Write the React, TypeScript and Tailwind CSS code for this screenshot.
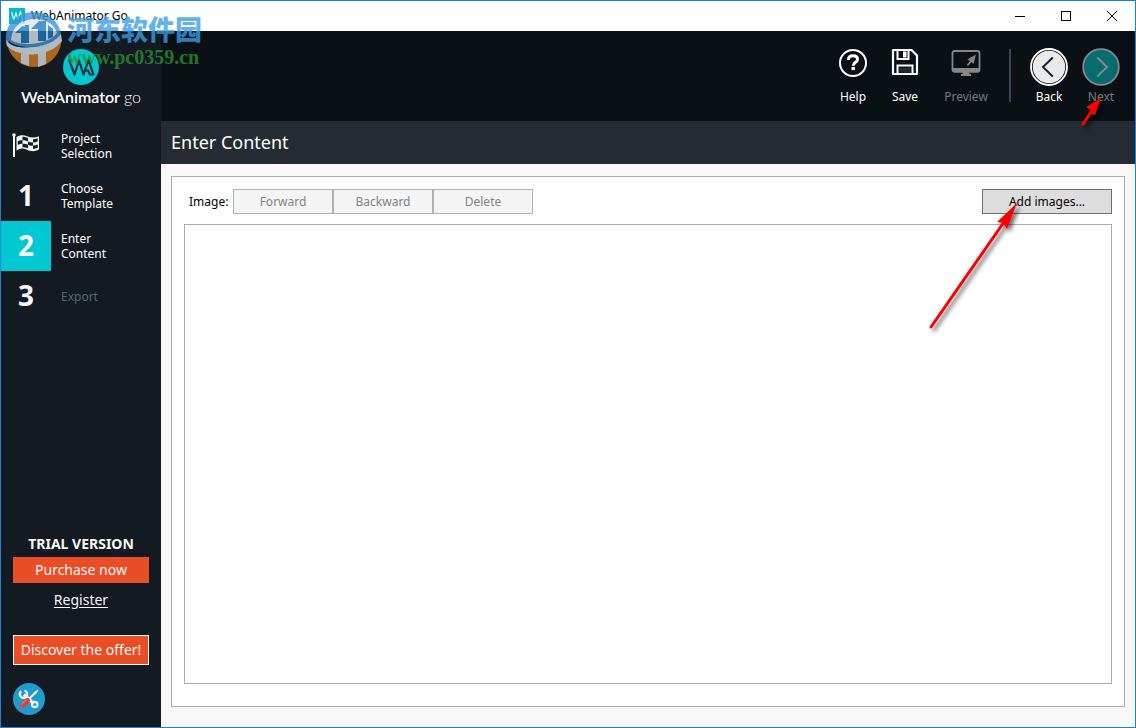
import type { ReactNode } from "react";

function HelpIcon() {
  return (
    <svg width="30" height="30" viewBox="0 0 30 30" fill="none" aria-hidden="true">
      <circle cx="15" cy="15" r="13" stroke="#fff" strokeWidth="2" />
      <path d="M10.4 12C10.4 9 12.2 7.700 15 7.700c2.800 0 4.500 1.300 4.500 3.500 0 3.200-4.300 3.200-4.300 6.600" stroke="#fff" strokeWidth="3" />
      <rect x="13.500" y="19" width="3.400" height="3" fill="#fff" />
    </svg>
  );
}

function SaveIcon() {
  return (
    <svg width="28" height="28" viewBox="0 0 28 28" fill="none" aria-hidden="true">
      <path d="M2 2H20.500L26 7.500V26H2Z" stroke="#fff" strokeWidth="2.200" strokeLinejoin="round" />
      <path d="M6.500 2V11H17.500V2" stroke="#fff" strokeWidth="2" />
      <rect x="12" y="3.500" width="3.500" height="6" fill="#fff" />
      <path d="M6.500 26V17.500H21.500V26" stroke="#fff" strokeWidth="2" />
      <rect x="8" y="19.500" width="12" height="5" fill="#1c2836" />
    </svg>
  );
}

function PreviewIcon() {
  return (
    <svg width="30" height="30" viewBox="0 0 30 30" fill="none" aria-hidden="true">
      <rect x="1.500" y="3" width="27" height="20.500" rx="2" stroke="#858789" strokeWidth="1.800" />
      <path d="M1 20h28v2.500a2 2 0 0 1-2 2H3a2 2 0 0 1-2-2Z" fill="#858789" />
      <path d="M12 24h6l.6 2h1.400v2H10v-2h1.400Z" fill="#858789" />
      <path d="M25 6.500 22.500 16l-2-2L17 18l-1.200-1.200 3.200-3.800-2.600-1.600Z" fill="#858789" />
    </svg>
  );
}

function BackIcon() {
  return (
    <svg width="38" height="38" viewBox="0 0 38 38" fill="none" aria-hidden="true">
      <circle cx="19" cy="19" r="18" fill="#10161d" stroke="#fff" strokeWidth="1.800" />
      <circle cx="19" cy="19" r="16.200" fill="#e9e9ea" />
      <path d="M22.800 9.500 13 19l9.800 9.500" stroke="#17212e" strokeWidth="2" />
    </svg>
  );
}

function NextIcon() {
  return (
    <svg width="38" height="38" viewBox="0 0 38 38" fill="none" aria-hidden="true">
      <circle cx="19" cy="19" r="17.800" fill="#066c70" stroke="#858789" strokeWidth="1.800" />
      <path d="M15.200 9.500 25 19l-9.800 9.500" stroke="#858789" strokeWidth="2" />
    </svg>
  );
}

function FlagIcon() {
  return (
    <svg width="28" height="26" viewBox="0 0 28 26" fill="none" aria-hidden="true">
      <path d="M2 2V25" stroke="#f6f6f6" strokeWidth="2" />
      <circle cx="2" cy="3" r="1.800" fill="#f6f6f6" />
      <path d="M4.500 5C8 2.500 12 2.800 15 4.200 19 6 23 6 27 4.300V17.500C22 20 18.500 19.500 14.500 17.500 11 15.800 8 16 4.500 18.500Z" fill="#f6f6f6" />
      <path d="M10.500 4.800c2-.2 3.500.4 5.500 1.300v3.500c-2-1-3.500-1.400-5.500-1.200ZM5.800 9.300c1.600-.9 3.200-1.100 4.700-.9v3.400c-1.700-.1-3.200.2-4.700 1.100ZM16 9.600c1.800.8 3.200 1 5 .8v3.200c-1.900.2-3.300-.1-5-.8ZM21 7.200c1.700-.1 3.200-.4 4.700-1v3.200c-1.600.7-3 1-4.700 1ZM10.500 11.800c2 0 3.500.3 5.500 1v3.500c-1.900-.8-3.500-1.200-5.500-1.100ZM21 13.600c1.700-.1 3.200-.4 4.700-1v3.200c-1.600.8-3 1.100-4.700 1.100Z" fill="#131a21" />
    </svg>
  );
}

function ToolsIcon() {
  return (
    <svg width="32" height="32" viewBox="0 0 32 32" fill="none" aria-hidden="true">
      <circle cx="16" cy="16" r="16" fill="#209bcd" />
      <path d="M11 11.500 20.500 20.500" stroke="#eef0f0" strokeWidth="3.200" />
      <path d="M8.200 8.300A3.700 3.700 0 1 0 11.500 7.600" stroke="#eef0f0" strokeWidth="2.400" />
      <circle cx="21.800" cy="21.500" r="2.700" stroke="#eef0f0" strokeWidth="2.200" />
      <path d="M14.500 17.500 22.500 9.500" stroke="#f7f7f7" strokeWidth="2" />
      <path d="m21 9.500 3.500-2.700.6.600-2.300 3.800Z" fill="#fff" />
      <path d="M9.500 22.500 14.500 17.500" stroke="#db4437" strokeWidth="5" strokeLinecap="round" />
      <path d="m8.500 21.500 5-5" stroke="#ef7165" strokeWidth="1.200" />
    </svg>
  );
}

function LogoMark() {
  return (
    <svg width="36" height="36" viewBox="0 0 36 36" fill="none" aria-hidden="true">
      <circle cx="18" cy="18" r="18" fill="#00c8d2" />
      <path d="m6 10.500 5.500 15 4.500-14 4.500 14L25.500 11l5 14.500h-3.500l-2-4h-3" stroke="#17313b" strokeWidth="2.200" strokeLinejoin="round" />
    </svg>
  );
}

function AppIcon() {
  return (
    <svg width="16" height="16" viewBox="0 0 16 16" fill="none" aria-hidden="true">
      <rect width="16" height="16" fill="#00bcc6" />
      <path d="m2.500 4 2.300 7.500L7 5l2 6.500L11.300 4l2.500 7.500h-1.500" stroke="#fff" strokeWidth="1.100" />
    </svg>
  );
}

type ToolProps = { label: string; icon: ReactNode; width: string; disabled?: boolean };

function ToolButton({ label, icon, width, disabled }: ToolProps) {
  return (
    <button
      type="button"
      disabled={disabled}
      className={`flex flex-col items-center ${width} ${disabled ? "text-[#77797b]" : "text-white"}`}
    >
      <span className="flex h-[39px] items-start">{icon}</span>
      <span className="text-[12px] leading-5">{label}</span>
    </button>
  );
}

type StepProps = { marker: ReactNode; label: string; active?: boolean; disabled?: boolean };

function Step({ marker, label, active, disabled }: StepProps) {
  return (
    <li>
      <button
        type="button"
        disabled={disabled}
        aria-current={active ? "step" : undefined}
        className="flex h-[50px] w-full items-center text-left"
      >
        <span
          className={`flex h-[50px] w-[50px] items-center justify-center pb-[2px] text-[28px] font-bold text-[#f6f6f6] ${active ? "bg-[#00c8d2]" : ""}`}
        >
          {marker}
        </span>
        <span className={`ml-[10px] w-[70px] text-[12px] leading-[15px] ${disabled ? "text-[#5a6673]" : "text-white"}`}>
          {label}
        </span>
      </button>
    </li>
  );
}

function Watermark() {
  return (
    <div className="pointer-events-none absolute top-[10px] left-1 flex items-start">
      <svg width="58" height="58" viewBox="0 0 58 58" fill="none" opacity="0.780" aria-hidden="true">
        <path d="M3 37C8 49 18 56 29 56c15 0 27-12 27.500-28C48 36 36 39 24 39 15 39 8 38.500 3 37Z" fill="#d97a1c" />
        <path d="M16 37h8v18l-8-3ZM33 37l8-2v18l-8 3Z" fill="#dde3e8" />
        <path d="M2 36C-3 16 10 1 29 1c14 0 25 9 27 22-6 9-18 13-30 13-10 0-18-2-22-6Z" fill="#3b93d6" />
        <path d="M6 29C7 15 17 9 29 8c12 0 20 5 23 14-5 7-15 10-26 11-9 0-16-1-20-4Z" fill="#dfe8ef" />
        <path d="M10 22 18 14h6v18h-8V22ZM26 18l8-8h7v20h-8V18ZM43 14l5 4v8l-5 2Z" fill="#1c79bd" />
        <path d="M1 29c6 8 17 8 27 7 13-1 23-6 28-13l1 7c-6 8-17 13-29 13.500C16 44 5 39 2 35Z" fill="#dce7ef" />
        <path d="m17 9 1.200 2.500 2.600-.2-1.700 2 1.100 2.400-2.600-.8-2.200 1.500.2-2.700-2-1.800 2.600-.5Z" fill="#eaf2f8" />
      </svg>
      <div className="pt-[2px] pl-1">
        <div className="font-['Noto_Sans_CJK_SC',sans-serif] text-[27px] leading-8 font-black text-[#399de6]/80">河东软件园</div>
        <div className="font-['Liberation_Serif',serif] text-[20px] leading-6 font-bold text-[#26932c]/80">www.pc0359.cn</div>
      </div>
    </div>
  );
}

function Pointers() {
  return (
    <>
      <svg className="pointer-events-none absolute top-[198px] right-[107px]" width="104" height="140" viewBox="0 0 104 140" aria-hidden="true">
        <defs>
          <filter id="pointer-shadow" x="-20%" y="-20%" width="150%" height="150%">
            <feDropShadow dx="3" dy="3" stdDeviation="2" floodColor="#000" floodOpacity="0.6" />
          </filter>
        </defs>
        <g filter="url(#pointer-shadow)">
          <path d="M7 128 80 23" stroke="#fb0004" strokeWidth="3" strokeLinecap="round" />
          <path d="M93 4 73 23l6 1 4 6Z" fill="#fb0004" />
        </g>
      </svg>
      <svg className="pointer-events-none absolute top-[94px] right-[25px]" width="36" height="36" viewBox="0 0 36 36" aria-hidden="true">
        <g filter="url(#pointer-shadow)">
          <path d="m9 29 8-12" stroke="#fb0004" strokeWidth="3" strokeLinecap="round" />
          <path d="M27 3 12 12l4 3 1 4 4 1Z" fill="#fb0004" />
        </g>
      </svg>
    </>
  );
}

const imageActions = ["Forward", "Backward", "Delete"];

export default function App() {
  return (
    <div className="relative flex min-h-screen flex-col border border-[#1883d7] bg-[#f8f8f8] font-['Noto_Sans',sans-serif] text-[12px] text-black">
      <header className="flex h-[30px] items-center bg-white pl-2">
        <AppIcon />
        <span className="ml-[6px] text-[12px]">WebAnimator Go</span>
        <div className="ml-auto flex h-full">
          <button type="button" aria-label="Minimize" className="flex w-[46px] items-center justify-center">
            <svg width="10" height="10" viewBox="0 0 10 10" stroke="#000"><path d="M0 5.500h10" /></svg>
          </button>
          <button type="button" aria-label="Maximize" className="flex w-[46px] items-center justify-center">
            <svg width="10" height="10" viewBox="0 0 10 10" stroke="#000" fill="none"><rect x=".5" y=".5" width="9" height="9" /></svg>
          </button>
          <button type="button" aria-label="Close" className="flex w-[46px] items-center justify-center">
            <svg width="10" height="10" viewBox="0 0 10 10" stroke="#000"><path d="m0 0 10 10M10 0 0 10" /></svg>
          </button>
        </div>
      </header>

      <div className="flex flex-1">
        <aside className="flex w-40 shrink-0 flex-col bg-[#131a21]">
          <div className="flex h-[90px] flex-col items-center pt-[18px]">
            <LogoMark />
            <div className="flex items-baseline gap-1 font-['Lato',sans-serif] text-[16px] leading-6 text-white">
              <span className="font-semibold">WebAnimator</span>
              <span className="font-light">go</span>
            </div>
          </div>
          <nav aria-label="Steps">
            <ol>
              <Step marker={<FlagIcon />} label="Project Selection" />
              <Step marker="1" label="Choose Template" />
              <Step marker="2" label="Enter Content" active />
              <Step marker="3" label="Export" disabled />
            </ol>
          </nav>
          <div className="mt-auto flex flex-col px-3 pb-3">
            <p className="text-center text-[14px] leading-[26px] font-bold text-[#f6f6f6]">TRIAL VERSION</p>
            <button type="button" className="h-[26px] bg-[#e94e27] pb-[2px] text-[14px] text-[#f6f6f6]">Purchase now</button>
            <a href="#register" className="mt-1 self-center text-[14px] leading-[26px] text-[#f6f6f6] underline underline-offset-2">Register</a>
            <button type="button" className="mt-[22px] h-[30px] border border-white bg-[#e94e27] pb-[2px] text-[14px] whitespace-nowrap text-[#f6f6f6]">
              Discover the offer!
            </button>
            <button type="button" aria-label="Settings" className="mt-[18px] self-start">
              <ToolsIcon />
            </button>
          </div>
        </aside>

        <div className="flex flex-1 flex-col">
          <div className="flex h-[90px] items-start justify-end bg-[#0b1014] pt-[17px] pr-2">
            <ToolButton label="Help" icon={<HelpIcon />} width="w-[52px]" />
            <ToolButton label="Save" icon={<SaveIcon />} width="w-[52px]" />
            <ToolButton label="Preview" icon={<PreviewIcon />} width="w-[70px]" disabled />
            <div className="mr-3 ml-2 mt-[1px] h-[53px] w-[2px] bg-[#34475b]" />
            <ToolButton label="Back" icon={<BackIcon />} width="w-[52px]" />
            <ToolButton label="Next" icon={<NextIcon />} width="w-[52px]" disabled />
          </div>
          <h1 className="flex h-[43px] items-center bg-[#242b32] pl-[10px] text-[18px] text-white">Enter Content</h1>
          <main className="flex flex-1 flex-col px-[10px] pt-3 pb-5">
            <section className="flex flex-1 flex-col border border-[#abadb3] bg-white px-3 pt-3 pb-[22px]">
              <div className="flex h-[25px] items-center">
                <span className="w-[49px] pl-[5px]">Image:</span>
                {imageActions.map((action) => (
                  <button
                    key={action}
                    type="button"
                    disabled
                    className="h-[25px] w-[100px] border border-[#adb2b5] bg-[#f4f4f4] text-[#838383]"
                  >
                    {action}
                  </button>
                ))}
                <button type="button" className="ml-auto h-[25px] w-[130px] border border-[#707070] bg-[#dddddd]">
                  Add images...
                </button>
              </div>
              <div className="mt-[10px] flex-1 border border-[#abadb3]" aria-label="Image list" />
            </section>
          </main>
        </div>
      </div>
      <Watermark />
      <Pointers />
    </div>
  );
}
